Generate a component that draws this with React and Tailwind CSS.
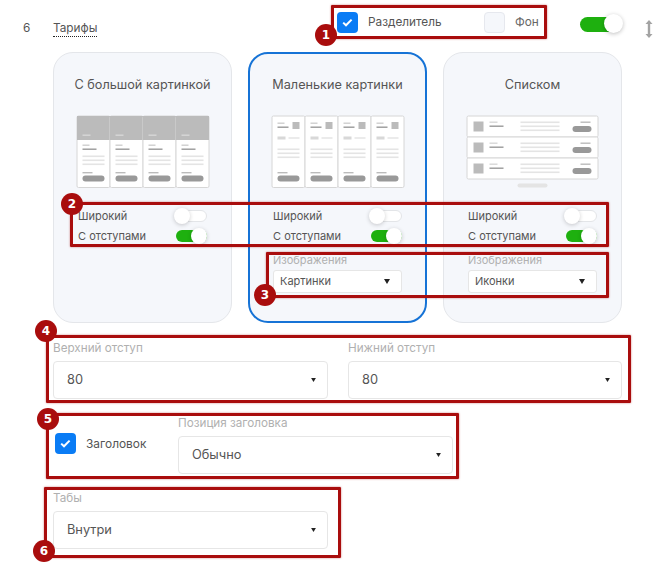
import React from "react";

const G = "#bbbbbb", D = "#999999", L = "#e4e4e4", M = "#d8d8d8";
const Bar = ({ x, y, w, h = 1.4, c, r = 0 }) => <rect x={x} y={y} width={w} height={h} fill={c} rx={r} />;

function Columns({ kind }) {
  const cols = [0, 33, 66, 99];
  return (
    <svg width="134" height="74" viewBox="0 0 134 74" className="block">
      {cols.map((o) => (
        <g key={o} transform={`translate(${o} 0)`}>
          <rect x="1" y="1" width="33" height="71.5" rx="1.5" fill="#fff" stroke="#d6d6d6" />
          {kind === "big" ? (
            <>
              <rect x="1" y="1" width="33" height="24" fill={G} />
              <Bar x={6.5} y={19.5} w={8} c={M} />
              <Bar x={6.5} y={29.5} w={7} c="#cfcfcf" />
              <Bar x={6.5} y={33.5} w={14} c={D} />
              <Bar x={6.5} y={40.5} w={22} c={L} h={1.6} />
              <Bar x={6.5} y={44.5} w={22} c={L} h={1.6} />
              <Bar x={6.5} y={48.5} w={22} c={L} h={1.6} />
            </>
          ) : (
            <>
              <Bar x={6.5} y={7.5} w={7} c="#cfcfcf" />
              <Bar x={6.5} y={11.5} w={11} c={D} />
              <rect x="21.5" y="7" width="7" height="7" fill={G} />
              <Bar x={6.5} y={21.5} w={8} h={3} c={M} />
              <Bar x={17.5} y={22.5} w={11} h={1} c={M} />
              <Bar x={6.5} y={33.5} w={22} c={L} h={1.6} />
              <Bar x={6.5} y={37.5} w={22} c={L} h={1.6} />
              <Bar x={6.5} y={41.5} w={22} c={L} h={1.6} />
            </>
          )}
          <Bar x={6.5} y={57} w={10} c={G} />
          <Bar x={6.5} y={60.5} w={22} h={6} r={3} c={D} />
        </g>
      ))}
    </svg>
  );
}

function ListPic() {
  return (
    <svg width="134" height="74" viewBox="0 0 134 74" className="block">
      {[0, 21, 42].map((o) => (
        <g key={o} transform={`translate(0 ${o})`}>
          <rect x="1" y="1" width="131" height="21" rx="1.5" fill="#fff" stroke="#d6d6d6" />
          <rect x="7.5" y="6.5" width="10" height="10" fill={G} />
          <Bar x={23.5} y={6.5} w={8} c={M} />
          <Bar x={23.5} y={10.5} w={14} c={D} />
          <Bar x={54.5} y={6.5} w={39} c={L} h={1.6} />
          <Bar x={54.5} y={10.5} w={39} c={L} h={1.6} />
          <Bar x={54.5} y={14.5} w={39} c={L} h={1.6} />
          <Bar x={114.5} y={6.5} w={10} c={G} />
          <Bar x={106.5} y={11} w={19} h={6} r={3} c={D} />
        </g>
      ))}
      <rect x="51.5" y="68.5" width="30" height="4" rx="2" fill="#e4e4e4" />
    </svg>
  );
}

function Toggle({ on }) {
  return (
    <span className="relative block w-[33px] h-[16px] shrink-0">
      <span className={`absolute left-[2px] right-0 top-[2px] h-[12px] rounded-full ${on ? "bg-[#1eb00f]" : "bg-white border border-[#e3e5e8]"}`} />
      <span className={`absolute top-0 w-[16px] h-[16px] rounded-full bg-white shadow-[0_1px_4px_rgba(0,0,0,0.2)] ${on ? "right-0" : "left-0"}`} />
    </span>
  );
}

function Check() {
  return (
    <span className="flex items-center justify-center w-[21px] h-[21px] rounded-[4px] bg-[#0a7cf5] shrink-0">
      <svg width="11" height="9" viewBox="0 0 11 9" fill="none">
        <path d="M1.2 4.6 L4 7.3 L9.6 1.6" stroke="#fff" strokeWidth="2" />
      </svg>
    </span>
  );
}

function Caret({ small }) {
  return (
    <svg width={small ? 6 : 5} height={small ? 5 : 4} viewBox="0 0 6 5" className="shrink-0">
      <path d="M0 0 H6 L3 5 Z" fill="#222" />
    </svg>
  );
}

function Select({ label, value, w = "w-[275px]" }) {
  return (
    <div className={w}>
      <div className="h-[14px] leading-[14px] text-[11.7px] text-[#b0b0b0] mb-[6px]">{label}</div>
      <div className="h-[38px] flex items-center justify-between pl-[13px] pr-[11px] bg-white border border-[#e6e6e6] rounded-[4px] text-[12.8px] text-[#555]">
        <span>{value}</span>
        <Caret />
      </div>
    </div>
  );
}

function Card({ title, pic, select, active }) {
  return (
    <div className={`w-[179px] h-[271px] rounded-[20px] bg-[#f5f7fb] flex flex-col items-center ${active ? "border-2 border-[#1673d6]" : "border border-[#e4e6ea]"}`}>
      <div className={`text-[12.7px] leading-[16px] text-[#555] ${active ? "mt-[23px]" : "mt-[24px]"}`}>{title}</div>
      <div className="mt-[22px]">{pic}</div>
      <div className="w-[129px] mt-[19px] text-[11px] text-[#555]">
        <div className="flex items-center justify-between h-[16px]"><span>Широкий</span><Toggle /></div>
        <div className="flex items-center justify-between h-[16px] mt-[4px]"><span>С отступами</span><Toggle on /></div>
        {select && (
          <div className="mt-[9px]">
            <div className="text-[11px] leading-[14px] text-[#b0b0b0] mb-[3px]">Изображения</div>
            <div className="h-[23px] flex items-center justify-between pl-[6px] pr-[11px] bg-white border border-[#e6e6e6] rounded-[3px] text-[11px] text-[#555]">
              <span>{select}</span>
              <Caret small />
            </div>
          </div>
        )}
      </div>
    </div>
  );
}

function Box({ cls, n, badge }) {
  return (
    <>
      <div className={`absolute border-[3px] border-[#a90d0d] rounded-[1px] shadow-[0_0_2px_rgba(169,13,13,0.6)] ${cls}`} />
      <div className={`absolute w-[22px] h-[22px] rounded-full bg-[#a90d0d] text-white text-[12px] font-bold flex items-center justify-center font-['DejaVu_Sans',sans-serif] ${badge}`}>{n}</div>
    </>
  );
}

export default function App() {
  return (
    <div className="relative w-[670px] h-[571px] bg-white overflow-hidden font-['Inter',sans-serif] pt-[12px]">
      <div className="flex items-center h-[21px] text-[11.8px] text-[#555]">
        <span className="ml-[23px] w-[30px] mt-[12px]">6</span>
        <span className="border-b border-dotted border-[#222] leading-[15px] mt-[13px] w-[44px]">Тарифы</span>
        <span className="ml-[240px]"><Check /></span>
        <span className="ml-[10px] w-[116px]">Разделитель</span>
        <span className="w-[21px] h-[21px] rounded-[4px] bg-[#f5f7fb] border border-[#e6e8ee]" />
        <span className="ml-[10px] text-[#666] w-[23px]">Фон</span>
        <span className="relative block w-[43px] h-[19px] ml-[42px] mt-[2px]">
          <span className="absolute left-0 right-[3px] top-[3px] h-[15px] rounded-full bg-[#1eb00f]" />
          <span className="absolute right-0 top-0 w-[19px] h-[19px] rounded-full bg-white shadow-[0_1px_4px_rgba(0,0,0,0.25)]" />
        </span>
        <svg width="8" height="18" viewBox="0 0 8 18" className="ml-[22px] mt-[12px]">
          <path d="M4 0 L7.5 4 H5.2 V14 H7.5 L4 18 L0.5 14 H2.8 V4 H0.5 Z" fill="#a3a3a3" />
        </svg>
      </div>

      <div className="flex gap-[16px] ml-[53px] mt-[19px]">
        <Card title="С большой картинкой" pic={<Columns kind="big" />} />
        <Card active title="Маленькие картинки" pic={<Columns kind="small" />} select="Картинки" />
        <Card title="Списком" pic={<ListPic />} select="Иконки" />
      </div>

      <div className="ml-[53px] mt-[18px] flex gap-[20px]">
        <Select label="Верхний отступ" value="80" />
        <Select label="Нижний отступ" value="80" w="w-[274px]" />
      </div>

      <div className="ml-[55px] mt-[17px] flex">
        <div className="flex items-center h-[21px] mt-[17px] w-[123px] text-[11.9px] text-[#555]">
          <Check />
          <span className="ml-[10px]">Заголовок</span>
        </div>
        <Select label="Позиция заголовка" value="Обычно" />
      </div>

      <div className="ml-[53px] mt-[17px]">
        <Select label="Табы" value="Внутри" />
      </div>

      <Box cls="left-[331px] top-[5px] w-[216px] h-[34px]" n="1" badge="left-[315px] top-[24px]" />
      <Box cls="left-[70px] top-[202px] w-[539px] h-[45px]" n="2" badge="left-[61px] top-[193px]" />
      <Box cls="left-[266px] top-[252px] w-[343px] h-[46px]" n="3" badge="left-[254px] top-[284px]" />
      <Box cls="left-[46px] top-[335px] w-[585px] h-[68px]" n="4" badge="left-[35px] top-[320px]" />
      <Box cls="left-[46px] top-[413px] w-[413px] h-[66px]" n="5" badge="left-[37px] top-[408px]" />
      <Box cls="left-[44px] top-[487px] w-[297px] h-[71px]" n="6" badge="left-[33px] top-[540px]" />
    </div>
  );
}
